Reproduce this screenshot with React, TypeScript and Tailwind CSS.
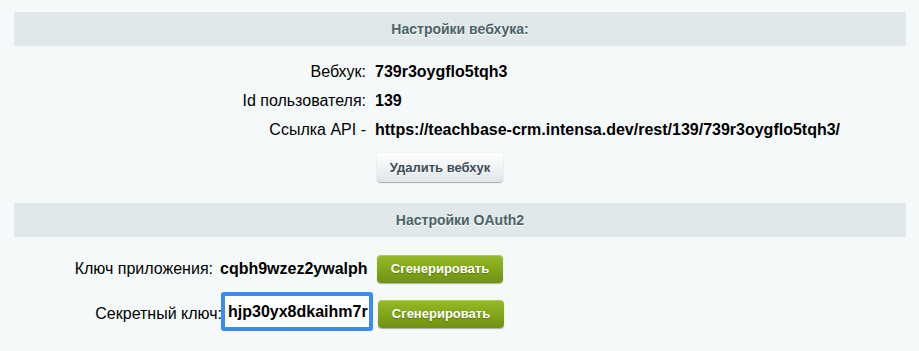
import React from 'react';

const font = "font-['Liberation_Sans',Arial,sans-serif]";

const SectionHeader: React.FC<{ title: string }> = ({ title }) => (
  <div className="flex h-[34px] items-center justify-center bg-[#e0e8ea] text-[14px] font-bold text-[#4b6267] [text-shadow:0_1px_0_#fff]">
    {title}
  </div>
);

const GreenButton: React.FC<{ className?: string }> = ({ className = '' }) => (
  <button
    className={`flex h-[28px] w-[126px] shrink-0 items-center justify-center rounded-[4px] bg-gradient-to-b from-[#97ba26] to-[#6f9212] text-[13px] font-bold text-white shadow-[0_1px_1px_rgba(0,0,0,0.3),inset_0_1px_0_rgba(255,255,255,0.25)] [text-shadow:0_1px_1px_rgba(70,90,0,0.6)] ${className}`}
  >
    Сгенерировать
  </button>
);

export default function App() {
  const rows = [
    { label: 'Вебхук:', value: '739r3oygflo5tqh3' },
    { label: 'Id пользователя:', value: '139' },
    { label: 'Ссылка API -', value: 'https://teachbase-crm.intensa.dev/rest/139/739r3oygflo5tqh3/' },
  ];

  return (
    <div className={`min-h-[351px] bg-[#f5f9f9] pl-[14px] pr-[13px] pt-[12px] text-black ${font}`}>
      <SectionHeader title="Настройки вебхука:" />

      {/* webhook info */}
      <div className="mt-[11px] text-[16px]">
        {rows.map((r) => (
          <div key={r.label} className="grid h-[29px] grid-cols-[356px_1fr] items-center">
            <div className="pr-[4px] text-right">{r.label}</div>
            <div className="pl-[5px] font-bold">{r.value}</div>
          </div>
        ))}
        <div className="mt-[9px] grid grid-cols-[356px_1fr]">
          <div />
          <div className="pl-[7px]">
            <button className="flex h-[29px] w-[126px] items-center justify-center rounded-[4px] bg-gradient-to-b from-[#ffffff] to-[#dfe6e8] text-[13px] font-bold text-[#3f4b54] shadow-[0_0_1px_rgba(0,0,0,0.2),0_1px_1px_rgba(0,0,0,0.3),inset_0_1px_0_#fff] [text-shadow:0_1px_0_rgba(255,255,255,0.8)]">
              Удалить вебхук
            </button>
          </div>
        </div>
      </div>

      <div className="mt-[21px]">
        <SectionHeader title="Настройки OAuth2" />
      </div>

      {/* oauth keys */}
      <div className="mt-[18px] text-[16px]">
        <div className="flex h-[28px] items-center">
          <div className="w-[199px] whitespace-nowrap text-right">Ключ приложения:</div>
          <div className="ml-[7px] w-[147px] whitespace-nowrap font-bold">cqbh9wzez2ywalph</div>
          <GreenButton className="ml-[10px]" />
        </div>
        <div className="mt-[17px] flex h-[28px] items-center">
          <div className="w-[208px] whitespace-nowrap text-right">Секретный ключ:</div>
          <div className="-ml-px -mt-[5px] flex h-[39px] w-[152px] items-center whitespace-nowrap rounded-[3px] border-[4px] border-[#3b8cf2] bg-white pl-[3px] font-bold">
            hjp30yx8dkaihm7r
          </div>
          <GreenButton className="ml-[5px]" />
        </div>
      </div>
    </div>
  );
}
